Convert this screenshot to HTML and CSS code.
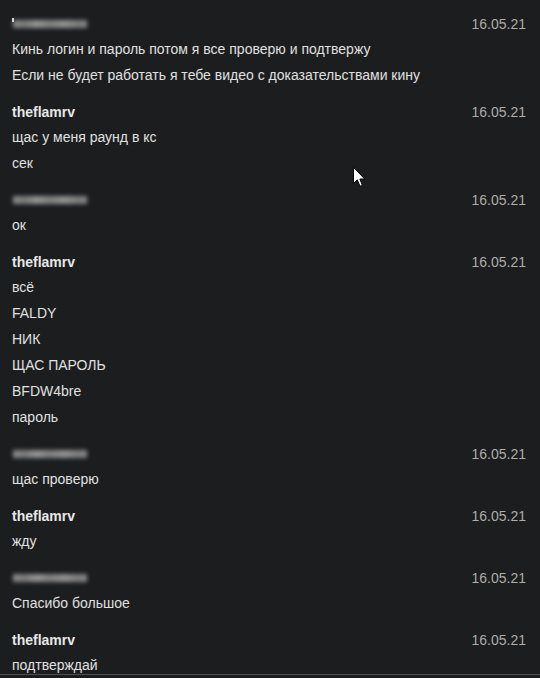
FILE: index.html
```html
<!DOCTYPE html>
<html lang="ru">
<head>
<meta charset="utf-8">
<title>Chat</title>
<link rel="stylesheet" href="styles.css">
</head>
<body>
<div class="chat">
  <div class="msg">
    <div class="head"><span class="who"><span class="blur"></span><span class="tick"></span></span><span class="date">16.05.21</span></div>
    <div class="line">Кинь логин и пароль потом я все проверю и подтвержу</div>
    <div class="line">Если не будет работать я тебе видео с доказательствами кину</div>
  </div>
  <div class="msg">
    <div class="head"><span class="name">theflamrv</span><span class="date">16.05.21</span></div>
    <div class="line">щас у меня раунд в кс</div>
    <div class="line">сек</div>
  </div>
  <div class="msg">
    <div class="head"><span class="who"><span class="blur"></span></span><span class="date">16.05.21</span></div>
    <div class="line">ок</div>
  </div>
  <div class="msg">
    <div class="head"><span class="name">theflamrv</span><span class="date">16.05.21</span></div>
    <div class="line">всё</div>
    <div class="line">FALDY</div>
    <div class="line">НИК</div>
    <div class="line">ЩАС ПАРОЛЬ</div>
    <div class="line">BFDW4bre</div>
    <div class="line">пароль</div>
  </div>
  <div class="msg">
    <div class="head"><span class="who"><span class="blur"></span></span><span class="date">16.05.21</span></div>
    <div class="line">щас проверю</div>
  </div>
  <div class="msg">
    <div class="head"><span class="name">theflamrv</span><span class="date">16.05.21</span></div>
    <div class="line">жду</div>
  </div>
  <div class="msg">
    <div class="head"><span class="who"><span class="blur"></span></span><span class="date">16.05.21</span></div>
    <div class="line">Спасибо большое</div>
  </div>
  <div class="msg">
    <div class="head"><span class="name">theflamrv</span><span class="date">16.05.21</span></div>
    <div class="line">подтверждай</div>
  </div>
</div>
<svg class="cursor" width="13" height="21" viewBox="0 0 13 21">
  <path d="M0.5 0.5 L0.5 16.5 L4.3 12.8 L7 19.3 L9.4 18.3 L6.8 12 L11.8 12 Z" fill="#ffffff" stroke="#000000" stroke-width="1"/>
</svg>
</body>
</html>
```
FILE: styles.css
```css
html, body {
  margin: 0;
  padding: 0;
  background: #1c1d1f;
}
body {
  font-family: "Liberation Sans", Arial, sans-serif;
  font-size: 14px;
  color: #e0e0e0;
  position: relative;
  width: 540px;
  height: 678px;
  overflow: hidden;
}
.chat {
  height: 674px;
  overflow: hidden;
  border-bottom: 1px solid #4e4f51;
}
.msg {
  padding: 12px 14px 0 12px;
}
.head {
  display: flex;
  justify-content: space-between;
  align-items: center;
  height: 24px;
  line-height: 24px;
}
.name {
  font-weight: bold;
  color: #e8e8e8;
}
.date {
  color: #aeaca8;
}
.line {
  line-height: 26px;
  height: 26px;
  white-space: nowrap;
}
.who {
  position: relative;
  display: block;
  width: 78px;
  height: 14px;
}
.blur {
  position: absolute;
  left: 1px;
  top: 3px;
  width: 74px;
  height: 8px;
  background: linear-gradient(90deg, #8e8e8e 0%, #7a7a7a 15%, #969696 32%, #808080 50%, #939393 70%, #7c7c7c 88%, #8a8a8a 100%);
  filter: blur(2px);
}
.tick {
  position: absolute;
  left: 0;
  top: 1px;
  width: 2px;
  height: 4px;
  background: #d6d6d6;
}
.cursor {
  position: absolute;
  left: 353px;
  top: 167px;
}
```
